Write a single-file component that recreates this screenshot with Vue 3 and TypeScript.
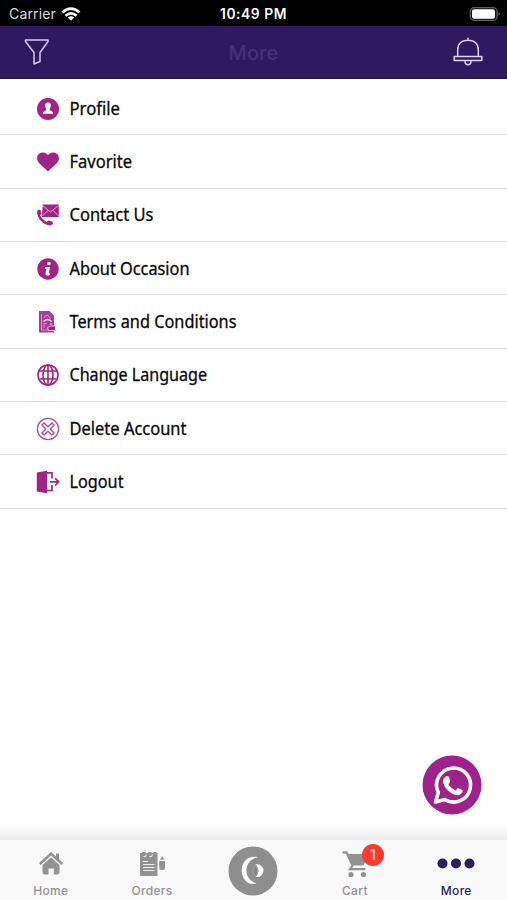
<script setup lang="ts">
interface MenuItem {
  label: string
  icon: string
  width: number
}

const items: MenuItem[] = [
  { label: 'Profile', icon: 'profile', width: 50.5 },
  { label: 'Favorite', icon: 'heart', width: 62.5 },
  { label: 'Contact Us', icon: 'contact', width: 84 },
  { label: 'About Occasion', icon: 'info', width: 120 },
  { label: 'Terms and Conditions', icon: 'terms', width: 167 },
  { label: 'Change Language', icon: 'globe', width: 137.5 },
  { label: 'Delete Account', icon: 'delete', width: 117 },
  { label: 'Logout', icon: 'logout', width: 54 },
]
</script>

<template>
  <div class="screen">
    <div class="status">
      <div class="carrier">
        <span>Carrier</span>
        <svg width="20" height="14" viewBox="0 0 20 14" fill="none" stroke="#fff" stroke-width="2.7">
          <path d="M1.5 5.4Q10-2 18.5 5.4M4.5 8.7Q10 4 15.5 8.7" />
          <path d="M6.8 10.4Q10 8 13.2 10.4L10 13.7Z" fill="#fff" stroke="none" />
        </svg>
      </div>
      <span class="clock">10:49 PM</span>
      <svg class="battery" width="32" height="16" viewBox="0 0 32 16">
        <rect x="1.2" y="1.7" width="27" height="12.6" rx="4" fill="#111" stroke="#606060" stroke-width="1.3" />
        <rect x="3" y="3.3" width="23" height="9.4" rx="2.2" fill="#fff" />
        <path d="M29.5 6q3 2 0 4Z" fill="#606060" />
      </svg>
    </div>

    <header class="header">
      <svg width="26" height="28" viewBox="0 0 26 28" fill="none" stroke="#d6cbef" stroke-width="1.5" stroke-linejoin="round">
        <path d="M1.5 2H24V3.5L16 14.5V23.5L10 26V14.5L1.5 3.5Z" />
      </svg>
      <h1>More</h1>
      <svg width="30" height="30" viewBox="0 0 30 30" fill="none" stroke="#ded4f4" stroke-width="1.5" stroke-linejoin="round">
        <path d="M4.7 19.2V13C4.7 7 8.5 3.2 15 3.2S25.3 7 25.3 13V19.2M15 3.2V.8M1.2 19.5H28.8V23.5H1.2ZM12 23.8C12 29.2 18 29.2 18 23.8" />
      </svg>
    </header>

    <main class="content">
      <ul class="menu">
        <li v-for="item in items" :key="item.icon" class="row">
          <svg class="row-icon" width="24" height="24" viewBox="0 0 24 24" fill="#a32285">
            <template v-if="item.icon === 'profile'">
              <circle cx="12" cy="12" r="11" />
              <path d="M12 5.5C8.5 5.5 8.4 9 10.3 12V13.2C8.5 14 6.9 14.3 6.7 16.8H17.3C17.1 14.3 15.5 14 13.7 13.2V12C15.6 9 15.5 5.5 12 5.5Z" fill="#fff" />
            </template>
            <path v-else-if="item.icon === 'heart'" d="M12 21.5L3 13C-1 8.5 1.8 2.5 6.8 2.5C9.5 2.5 11 3.8 12 5.3C13 3.8 14.5 2.5 17.2 2.5C22.2 2.5 25 8.5 21 13Z" />
            <template v-else-if="item.icon === 'contact'">
              <path d="M6.8 1.5H22.8V14H5.8Z" />
              <path d="M7 3L14.5 9L22.5 2.6M6.3 13L12 7.5M22.5 13L17 7.3" fill="none" stroke="#efcee6" stroke-width=".8" />
              <path d="M2.5 6.4L4.7 7.2L5.2 10.8L4.2 12.5Q6.5 17 10.8 18.7L12.2 17.6L16.3 18.6L17 20.7Q15.3 23.4 11.4 22C5.5 20.2 1.5 14.5 1 9.3Q.9 7.3 2.5 6.4Z" />
            </template>
            <template v-else-if="item.icon === 'info'">
              <circle cx="12" cy="12" r="10.7" />
              <circle cx="13" cy="6.5" r="1.8" fill="#fff" />
              <path d="M9.4 10H14L12.7 16.2H14.2L13.8 18C11.2 19 9 18.7 9.5 16.3L10.4 12H9Z" fill="#fff" />
            </template>
            <template v-else-if="item.icon === 'terms'">
              <path d="M3 1H13.5L18 5.5V22.5H3Z" fill="#ab3b94" />
              <path d="M5.5 4V20H13M8 8L9.5 5.5H12L14.5 8.5M8 18V13.5H10.5" fill="none" stroke="#dfa5d3" stroke-width=".9" />
              <path d="M7.5 11.5Q11.5 7.5 15.5 11.5M14 14H16" fill="none" stroke="#f3dced" stroke-width="1.2" />
              <path d="M11.5 17.5L14.5 16H19.5V20.5H12.5Z" stroke="#f3dced" stroke-width=".8" />
            </template>
            <g v-else-if="item.icon === 'globe'" fill="none" stroke="#a32285" stroke-width="1.6">
              <circle cx="12" cy="12" r="10" />
              <ellipse cx="12" cy="12" rx="5" ry="10" />
              <path d="M12 2V22M3.5 8H20.5M3.5 16H20.5" />
            </g>
            <g v-else-if="item.icon === 'delete'" fill="none" stroke="#b04b9c">
              <circle cx="12" cy="12" r="10.6" stroke-width="1.3" />
              <path d="M8.1 5.9L12 9.8L15.9 5.9L18.1 8.1L14.2 12L18.1 15.9L15.9 18.1L12 14.2L8.1 18.1L5.9 15.9L9.8 12L5.9 8.1Z" stroke-width="1.4" stroke-linejoin="round" />
            </g>
            <template v-else>
              <path d="M.8 2.5L11 .8V23.2L.8 21.5Z" />
              <path d="M10.5 2.8H16V8.5M16 15V20.5H10.5M14 11.8H22.5M19.2 8.3L22.7 11.8L19.2 15.3" fill="none" stroke="#a32285" stroke-width="1.7" />
            </template>
          </svg>
          <svg class="row-label" :width="item.width + 2" height="26">
            <text x="0.5" y="19" :textLength="item.width" lengthAdjust="spacingAndGlyphs">{{ item.label }}</text>
          </svg>
        </li>
      </ul>
      <button class="whatsapp" aria-label="WhatsApp">
        <svg width="60" height="60" viewBox="0 0 60 60">
          <circle cx="30" cy="30" r="29.5" fill="#9f218b" />
          <path d="M13.5 47L16.3 37.5A17 17 0 1 1 22.8 44.6Z" fill="none" stroke="#fff" stroke-width="3.6" stroke-linejoin="round" />
          <path d="M22.5 22.5C24.2 20.6 26.3 20.4 27 22.2L28.2 25.5C28.5 27 27.1 28.2 26.4 29.2Q29 33.5 33.5 35.4L36 32.9L40 34.8C41.8 36 39.4 39.2 37.2 40C32.6 41.6 21.6 34.4 21 26.2Q20.9 24 22.5 22.5Z" fill="#fff" />
        </svg>
      </button>
    </main>

    <div class="bar-shadow"></div>
    <nav class="tabs">
      <a class="tab">
        <svg width="26" height="26" viewBox="0 0 26 26" fill="#929292">
          <path d="M1 13L13 2L18 6.5V3.5H21V9.3L25 13L23.3 15L13 5.6L2.7 15Z" />
          <path d="M4.5 15L13 7.3L21.5 15V22.5Q21.5 24.5 19.5 24.5H15.8V18.5H10.5V24.5H6.5Q4.5 24.5 4.5 22.5Z" />
        </svg>
        <span>Home</span>
      </a>
      <a class="tab">
        <svg width="28" height="26" viewBox="0 0 28 26" fill="#929292">
          <path d="M2 3H19.5V26H2Z" />
          <path d="M5 7C1.5 5 5 1 8 4M11 7C7.5 5 11 1 14 4M16 6C14.5 3 17 1.5 19 4" fill="none" stroke="#929292" stroke-width="1.8" />
          <path d="M5.5 6.5Q8 7 8.5 4.5M11.5 6.5Q14 7 14.5 4.5M5 11.5H10M5 14.5H16.5M5 17.5H16.5M5 20.5H16.5" fill="none" stroke="#eee" stroke-width="1.1" />
          <path d="M21.3 11H27V18Q27 20 25 20H23.3Q21.3 20 21.3 18ZM22 9.8L24.2 6.3L26.5 9.8Z" />
        </svg>
        <span>Orders</span>
      </a>
      <a class="tab center" aria-label="Occasion">
        <svg width="50" height="50" viewBox="0 0 50 50">
          <circle cx="25" cy="25" r="24.5" fill="#8e8e8e" />
          <path d="M30 11.3C20.5 9 13.7 15.8 13.7 24.5C13.7 33.5 20.5 40 28.5 37.4C22 35.3 18.4 30.3 18.4 24.5C18.4 18.2 22.5 12.5 30 11.3Z" fill="#fff" />
          <path d="M27.5 18.5A6.4 6.4 0 1 1 28 31Q33.2 24.5 27.5 18.5Z" fill="#fff" />
          <path d="M27.5 19Q22.5 24.5 27.5 30.5Q32 24.5 27.5 19Z" fill="#868686" stroke="#aaa" stroke-width=".7" />
        </svg>
      </a>
      <a class="tab">
        <span class="cart">
          <svg width="26" height="28" viewBox="0 0 26 28" fill="#929292">
            <path d="M.5 2.3H4.5L10.5 15.5L8 19.2H23.5" fill="none" stroke="#929292" stroke-width="2.2" />
            <path d="M5 4H26L21.5 15.5H10Z" />
            <circle cx="9" cy="24.5" r="2.6" /><circle cx="21.5" cy="24.5" r="2.6" />
          </svg>
          <b class="badge">1</b>
        </span>
        <span>Cart</span>
      </a>
      <a class="tab active">
        <svg width="38" height="26" viewBox="0 0 38 26" fill="#2d1c64">
          <circle cx="5.5" cy="13.5" r="5" /><circle cx="19" cy="13.5" r="5" /><circle cx="32.5" cy="13.5" r="5" />
        </svg>
        <span>More</span>
      </a>
    </nav>
  </div>
</template>

<style>
body {
  background: #fff;
}
</style>

<style scoped>
.screen {
  display: flex;
  flex-direction: column;
  width: 507px;
  height: 900px;
  overflow: hidden;
  background: #fff;
  font-family: Inter, "Liberation Sans", sans-serif;
}
.status {
  display: grid;
  grid-template-columns: 1fr auto 1fr;
  align-items: center;
  flex: none;
  height: 26px;
  padding: 1px 6px 0 9px;
  box-sizing: border-box;
  background: #000;
  color: #fff;
}
.carrier {
  display: flex;
  align-items: center;
  gap: 5px;
  color: #ddd;
  font-size: 14px;
  letter-spacing: 0.15px;
}
.clock {
  margin-right: 3px;
  font-size: 13.8px;
  font-weight: 600;
  letter-spacing: 0.55px;
}
.battery {
  justify-self: end;
}
.header {
  display: grid;
  grid-template-columns: 1fr auto 1fr;
  align-items: center;
  flex: none;
  height: 53px;
  padding: 0 24px;
  box-sizing: border-box;
  border-bottom: 1px solid #22104f;
  background: #2f1a62;
}
.header svg:last-child {
  justify-self: end;
}
.header h1 {
  margin: 1px 0 0;
  color: #47307b;
  font-size: 20px;
  font-weight: 500;
  letter-spacing: 0.1px;
}
.content {
  display: flex;
  flex: 1;
  flex-direction: column;
  justify-content: space-between;
}
.menu {
  margin: 0;
  padding: 3px 0 0;
  list-style: none;
}
.row {
  display: flex;
  align-items: center;
  gap: 9px;
  height: 53.35px;
  padding: 1px 0 0 36px;
  box-sizing: border-box;
  border-bottom: 1px solid #dedede;
}
.row-label {
  overflow: visible;
  font-family: "Noto Sans", sans-serif;
  font-size: 17.5px;
  font-weight: 400;
  fill: #090909;
  stroke: #090909;
  stroke-width: 0.3px;
}
.whatsapp {
  align-self: flex-end;
  width: 60px;
  height: 60px;
  margin: 0 25px 10px 0;
  padding: 0;
  border: 0;
  background: none;
}
.bar-shadow {
  flex: none;
  height: 15px;
  background: linear-gradient(#fefefe, #ececec);
}
.tabs {
  display: grid;
  grid-template-columns: repeat(5, 1fr);
  flex: none;
  height: 60px;
  background: #f9f9f9;
}
.tab {
  display: flex;
  flex-direction: column;
  align-items: center;
  padding-top: 10px;
  color: #929292;
  font-size: 12px;
  font-weight: 500;
  letter-spacing: 0.3px;
  line-height: 15px;
  gap: 7px;
}
.tab svg {
  display: block;
}
.center {
  padding-top: 6px;
}
.active {
  color: #2d1c64;
}
.cart {
  position: relative;
  height: 26px;
}
.badge {
  position: absolute;
  top: -6px;
  left: 20px;
  width: 22px;
  height: 22px;
  border-radius: 50%;
  background: #fb3b32;
  color: #fff;
  font-size: 15px;
  font-weight: 400;
  line-height: 22px;
  text-align: center;
}
</style>
